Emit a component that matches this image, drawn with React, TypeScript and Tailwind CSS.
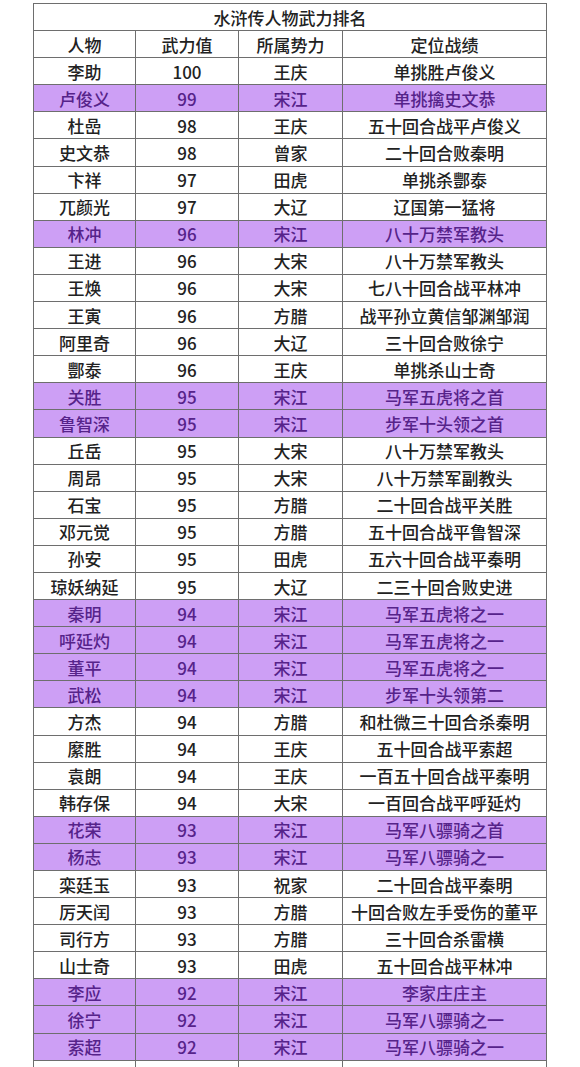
import React from "react";

type Row = [string, string, string, string, boolean];

const rows: Row[] = [
  ["李助", "100", "王庆", "单挑胜卢俊义", false],
  ["卢俊义", "99", "宋江", "单挑擒史文恭", true],
  ["杜嵒", "98", "王庆", "五十回合战平卢俊义", false],
  ["史文恭", "98", "曾家", "二十回合败秦明", false],
  ["卞祥", "97", "田虎", "单挑杀酆泰", false],
  ["兀颜光", "97", "大辽", "辽国第一猛将", false],
  ["林冲", "96", "宋江", "八十万禁军教头", true],
  ["王进", "96", "大宋", "八十万禁军教头", false],
  ["王焕", "96", "大宋", "七八十回合战平林冲", false],
  ["王寅", "96", "方腊", "战平孙立黄信邹渊邹润", false],
  ["阿里奇", "96", "大辽", "三十回合败徐宁", false],
  ["酆泰", "96", "王庆", "单挑杀山士奇", false],
  ["关胜", "95", "宋江", "马军五虎将之首", true],
  ["鲁智深", "95", "宋江", "步军十头领之首", true],
  ["丘岳", "95", "大宋", "八十万禁军教头", false],
  ["周昂", "95", "大宋", "八十万禁军副教头", false],
  ["石宝", "95", "方腊", "二十回合战平关胜", false],
  ["邓元觉", "95", "方腊", "五十回合战平鲁智深", false],
  ["孙安", "95", "田虎", "五六十回合战平秦明", false],
  ["琼妖纳延", "95", "大辽", "二三十回合败史进", false],
  ["秦明", "94", "宋江", "马军五虎将之一", true],
  ["呼延灼", "94", "宋江", "马军五虎将之一", true],
  ["董平", "94", "宋江", "马军五虎将之一", true],
  ["武松", "94", "宋江", "步军十头领第二", true],
  ["方杰", "94", "方腊", "和杜微三十回合杀秦明", false],
  ["縻胜", "94", "王庆", "五十回合战平索超", false],
  ["袁朗", "94", "王庆", "一百五十回合战平秦明", false],
  ["韩存保", "94", "大宋", "一百回合战平呼延灼", false],
  ["花荣", "93", "宋江", "马军八骠骑之首", true],
  ["杨志", "93", "宋江", "马军八骠骑之一", true],
  ["栾廷玉", "93", "祝家", "二十回合战平秦明", false],
  ["厉天闰", "93", "方腊", "十回合败左手受伤的董平", false],
  ["司行方", "93", "方腊", "三十回合杀雷横", false],
  ["山士奇", "93", "田虎", "五十回合战平林冲", false],
  ["李应", "92", "宋江", "李家庄庄主", true],
  ["徐宁", "92", "宋江", "马军八骠骑之一", true],
  ["索超", "92", "宋江", "马军八骠骑之一", true],
];

function Cell({ children, purple }: { children?: React.ReactNode; purple?: boolean }) {
  return (
    <div
      className={
        "h-[27.1px] border-r border-b border-[#6e6e6e] flex items-center justify-center text-[17px] leading-none font-medium whitespace-nowrap " +
        (purple ? "bg-[#cd9ff5] text-[#56238a]" : "bg-white text-[#222222]")
      }
    >
      {children}
    </div>
  );
}

export default function App() {
  return (
    <div
      className="w-[580px] h-[1067px] overflow-hidden bg-white pt-[3px] pl-[33px]"
      style={{ fontFamily: '"Noto Sans CJK SC", "Noto Sans", sans-serif' }}
    >
      <div className="w-[514px] border-l border-t border-[#6e6e6e]">
        <div className="h-[27.1px] border-r border-b border-[#6e6e6e] flex items-center justify-center text-[17px] leading-none font-medium text-[#222222]">
          水浒传人物武力排名
        </div>
        <div className="grid grid-cols-[102px_103px_104px_204px]">
          <Cell>人物</Cell>
          <Cell>武力值</Cell>
          <Cell>所属势力</Cell>
          <Cell>定位战绩</Cell>
          {rows.map((r, i) => (
            <React.Fragment key={i}>
              <Cell purple={r[4]}>{r[0]}</Cell>
              <Cell purple={r[4]}>{r[1]}</Cell>
              <Cell purple={r[4]}>{r[2]}</Cell>
              <Cell purple={r[4]}>{r[3]}</Cell>
            </React.Fragment>
          ))}
          <Cell />
          <Cell />
          <Cell />
          <Cell />
        </div>
      </div>
    </div>
  );
}
